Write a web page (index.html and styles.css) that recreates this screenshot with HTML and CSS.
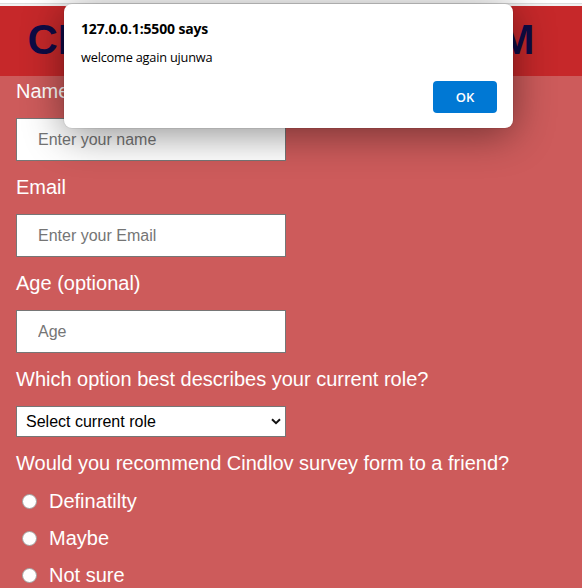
FILE: index.html
```html
<!DOCTYPE html>
<html lang="en">
<head>
<meta charset="utf-8">
<title>Cindlov Survey Form</title>
<link rel="stylesheet" href="styles.css">
</head>
<body>
<div class="strip"></div>
<header class="banner">
  <h1 class="title">CINDLOV SURVEY FORM</h1>
</header>
<form class="survey">
  <label class="field-label" for="name">Name</label>
  <input class="text-input" id="name" type="text" placeholder="Enter your name">
  <label class="field-label" for="email">Email</label>
  <input class="text-input" id="email" type="email" placeholder="Enter your Email">
  <label class="field-label" for="age">Age (optional)</label>
  <input class="text-input" id="age" type="number" placeholder="Age">
  <label class="field-label" for="role">Which option best describes your current role?</label>
  <div class="select-wrap">
    <select class="role-select" id="role">
      <option>Select current role</option>
      <option>Student</option>
      <option>Full time job</option>
      <option>Other</option>
    </select>
    <svg class="chevron" width="10" height="7" viewBox="0 0 10 7"><path d="M1 1.2 L5 5.2 L9 1.2" fill="none" stroke="#111" stroke-width="2"/></svg>
  </div>
  <p class="field-label">Would you recommend Cindlov survey form to a friend?</p>
  <div class="radio-group">
    <label class="radio-row"><input class="radio" type="radio" name="recommend">Definatilty</label>
    <label class="radio-row"><input class="radio" type="radio" name="recommend">Maybe</label>
    <label class="radio-row"><input class="radio" type="radio" name="recommend">Not sure</label>
  </div>
</form>
<div class="alert" role="dialog">
  <div class="alert-title">127.0.0.1:5500 says</div>
  <div class="alert-msg">welcome again ujunwa</div>
  <div class="alert-actions"><button class="alert-ok" type="button">OK</button></div>
</div>
</body>
</html>
```
FILE: styles.css
```css
html, body {
  height: 100%;
  overflow: hidden;
}
body {
  margin: 0;
  background: #cd5b5b;
  font-family: "Liberation Sans", Arial, sans-serif;
}
.strip {
  height: 6px;
  background: linear-gradient(#ffffff 0 3px, #dcdcdc 3px 4px, #f2f2f2 4px);
}
.banner {
  height: 70px;
  background: #c6282a;
}
.title {
  margin: 0;
  padding: 0 20px 2px 0;
  font-size: 42px;
  line-height: 68px;
  font-weight: bold;
  text-align: center;
  color: #0e0b45;
  white-space: nowrap;
}
.survey {
  display: flex;
  flex-direction: column;
  align-items: flex-start;
  gap: 15px;
  padding: 4px 16px 0;
}
.field-label {
  margin: 0;
  font-size: 20px;
  line-height: 23px;
  color: #ffffff;
}
.text-input {
  box-sizing: border-box;
  width: 270px;
  height: 43px;
  margin: 0;
  padding: 0 0 0 21px;
  border: 1px solid #767676;
  background: #ffffff;
  font-family: "Liberation Sans", Arial, sans-serif;
  font-size: 16px;
  color: #000;
  outline: none;
  -moz-appearance: textfield;
}
.text-input::placeholder {
  color: #757575;
}
.text-input::-webkit-outer-spin-button,
.text-input::-webkit-inner-spin-button {
  -webkit-appearance: none;
  margin: 0;
}
.select-wrap {
  position: relative;
  width: 270px;
  height: 31px;
}
.role-select {
  -webkit-appearance: none;
  appearance: none;
  box-sizing: border-box;
  width: 270px;
  height: 31px;
  margin: 0;
  padding: 0 0 0 9px;
  border: 1px solid #767676;
  border-radius: 0;
  background: #ffffff;
  font-family: "Liberation Sans", Arial, sans-serif;
  font-size: 16px;
  color: #000;
}
.chevron {
  position: absolute;
  right: 5px;
  top: 12px;
  pointer-events: none;
}
.radio-group {
  display: flex;
  flex-direction: column;
  gap: 14px;
}
.radio-row {
  display: flex;
  align-items: center;
  height: 23px;
  font-size: 20px;
  color: #ffffff;
}
.radio {
  -webkit-appearance: none;
  appearance: none;
  box-sizing: border-box;
  width: 15px;
  height: 15px;
  margin: 0 12px 0 6px;
  border: 1px solid #a0a0a0;
  border-radius: 50%;
  background: #ffffff;
}
.alert {
  position: absolute;
  left: 64px;
  top: 4px;
  box-sizing: border-box;
  width: 449px;
  height: 124px;
  padding: 15px 16px 15px 17px;
  background: #ffffff;
  border-radius: 8px;
  box-shadow: 0 0 0 1px rgba(0, 0, 0, 0.06), 0 6px 40px rgba(0, 0, 0, 0.45);
  font-family: "Open Sans", "Noto Sans", sans-serif;
  color: #000;
}
.alert-title {
  font-size: 14px;
  font-weight: bold;
  line-height: 20px;
  letter-spacing: -0.15px;
}
.alert-msg {
  margin-top: 9px;
  font-size: 12.75px;
  line-height: 18px;
  letter-spacing: -0.2px;
}
.alert-actions {
  display: flex;
  justify-content: flex-end;
  margin-top: 15px;
}
.alert-ok {
  width: 64px;
  height: 32px;
  border: none;
  border-radius: 4px;
  background: #0078d4;
  color: #ffffff;
  font-family: "Open Sans", "Noto Sans", sans-serif;
  font-size: 13px;
  font-weight: 600;
}
```
